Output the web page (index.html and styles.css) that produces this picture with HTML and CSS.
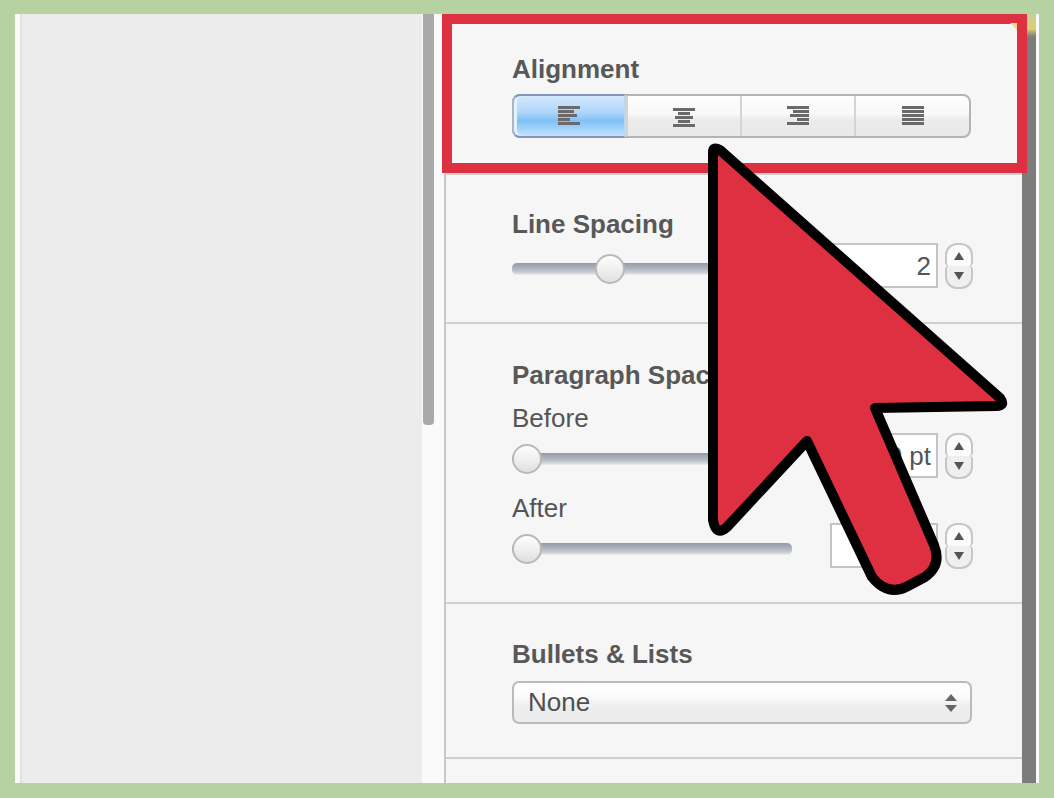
FILE: index.html
```html
<!DOCTYPE html>
<html lang="en">
<head>
    <meta charset="UTF-8">
    <title>Alignment</title>
    <link rel="stylesheet" href="styles.css">
</head>
<body>

<div class="stage">
    <div class="left-pane"></div>
    <div class="scroll-track"><div class="scroll-thumb"></div></div>

    <div class="panel">
        <div class="corner"></div>

        <section class="section section-align">
            <h3>Alignment</h3>
            <div class="segments">
                <div class="segment active">
                    <svg width="24" height="20" viewBox="0 0 24 20"><path d="M1 1.500h22M1 5.500h16M1 9.500h19M1 13.500h12M1 17.500h22"/></svg>
                </div>
                <div class="segment">
                    <svg class="low" width="24" height="20" viewBox="0 0 24 20"><path d="M1 1.500h22M6 5.500h12M3 9.500h18M6 13.500h12M1 17.500h22"/></svg>
                </div>
                <div class="segment">
                    <svg width="24" height="20" viewBox="0 0 24 20"><path d="M1 1.500h22M7 5.500h16M4 9.500h19M11 13.500h12M1 17.500h22"/></svg>
                </div>
                <div class="segment">
                    <svg width="24" height="20" viewBox="0 0 24 20"><path d="M1 1.500h22M1 5.500h22M1 9.500h22M1 13.500h22M1 17.500h22"/></svg>
                </div>
            </div>
        </section>

        <section class="section section-line">
            <h3>Line Spacing</h3>
            <div class="control-row">
                <div class="slider"><span class="thumb thumb-mid"></span></div>
                <div class="num-input">2</div>
                <div class="stepper"><span class="step-up"></span><span class="step-down"></span></div>
            </div>
        </section>

        <section class="section section-para">
            <h3>Paragraph Spacing</h3>
            <div class="sub-label first">Before</div>
            <div class="control-row">
                <div class="slider"><span class="thumb"></span></div>
                <div class="num-input">0 pt</div>
                <div class="stepper"><span class="step-up"></span><span class="step-down"></span></div>
            </div>
            <div class="sub-label">After</div>
            <div class="control-row">
                <div class="slider"><span class="thumb"></span></div>
                <div class="num-input">0 pt</div>
                <div class="stepper"><span class="step-up"></span><span class="step-down"></span></div>
            </div>
        </section>

        <section class="section section-bullets">
            <h3>Bullets &amp; Lists</h3>
            <div class="dropdown">
                <span>None</span>
                <span class="dropdown-arrows"><i class="arrow-up"></i><i class="arrow-down"></i></span>
            </div>
        </section>
    </div>

    <div class="side-bar"></div>
    <div class="edge"></div>
</div>

<!-- highlight box and pointer drawn over the screenshot -->
<div class="highlight"></div>
<svg class="pointer" width="1054" height="798" viewBox="0 0 1054 798">
    <path d="M713 152 Q713 146 720 150 L1000 398 Q1006 406 996 406 L875 408 L934 545 Q942 565 925 577 L908 586 Q888 597 872 577 L807 441 L727 527 Q716 537 713 520 Z"/>
</svg>

</body>
</html>
```

FILE: styles.css
```css
body {
    margin: 0;
    width: 1054px;
    height: 798px;
    overflow: hidden;
    background-color: #b5d2a0;
    font-family: "Liberation Sans", Arial, sans-serif;
    color: #555;
}

.stage {
    display: flex;
    height: 769px;
    padding: 14px 15px 15px 15px;
}

.left-pane {
    width: 402px;
    border-left: 5px solid #fbfbfb;
    background: linear-gradient(to right, #dcdcdc, #ececec 3px);
}

.scroll-track {
    width: 21px;
    padding-left: 1px;
    background-color: #fafafa;
    border-right: 2px solid #c8c8c8;
    background-clip: padding-box;
}

.scroll-thumb {
    width: 11px;
    height: 411px;
    background-color: #a9a9a9;
    border-radius: 0 0 4px 4px;
}

.panel {
    position: relative;
    width: 576px;
    background-color: #f6f6f6;
}

.corner {
    position: absolute;
    top: 9px;
    right: 5px;
    width: 0;
    height: 0;
    border-top: 7px solid #f1d88c;
    border-left: 7px solid transparent;
    z-index: 3;
}

.side-bar {
    width: 14px;
    background: linear-gradient(to bottom, #c5cf9a, #e0cc70 15px, #8a8a80 21px, #7c7c7c 24px);
}

.edge {
    width: 3px;
    background-color: #fafafa;
}

.section {
    padding-left: 66px;
    border-bottom: 2px solid #cfcfcf;
}

.section-align {
    padding-top: 40px;
    padding-bottom: 35px;
}

.section-line {
    padding-top: 34px;
    padding-bottom: 34px;
}

.section-para {
    padding-top: 36px;
    padding-bottom: 34px;
}

.section-bullets {
    padding-top: 35px;
    padding-bottom: 33px;
}

h3 {
    margin: 0;
    font-size: 26px;
    line-height: 30px;
    font-weight: bold;
    color: #585858;
}

.sub-label {
    margin-top: 15px;
    font-size: 26px;
    line-height: 30px;
}

.sub-label.first {
    margin-top: 13px;
}

/* segmented control */
.segments {
    display: flex;
    width: 459px;
    height: 44px;
    margin-top: 10px;
    box-sizing: border-box;
    border: 2px solid #b4b4b4;
    border-radius: 8px;
    background: linear-gradient(to bottom, #fefefe, #f8f8f8 45%, #ebebeb 60%, #e9e9e9);
}

.segment {
    flex: 0 0 114px;
    box-sizing: border-box;
    display: flex;
    align-items: center;
    justify-content: center;
    border-left: 2px solid #d4d4d4;
}

.segment:last-child {
    flex: 1;
}

.segment.active {
    margin: -2px 0 -2px -2px;
    border: 2px solid #8095b8;
    border-left-color: #a9b6c9;
    border-right-color: #b9d8f2;
    border-radius: 8px 0 0 8px;
    box-shadow: inset 3px 0 0 #e4f2fd;
    background: linear-gradient(to bottom, #d3e8fc, #b0d7fb 40%, #80c0f6 62%, #c2e2fb);
}

.segment svg {
    fill: none;
    stroke: #6a6a6a;
    stroke-width: 3;
}

.segment svg.low {
    margin-top: 4px;
}

/* slider + number field */
.control-row {
    display: flex;
    align-items: center;
    height: 45px;
}

.section-line .control-row {
    margin-top: 4px;
}

.slider {
    position: relative;
    width: 280px;
    height: 12px;
    margin-top: 7px;
    border-radius: 5px;
    background: linear-gradient(to bottom, #969ba7, #b2b6c1 50%, #cdd0d6 80%, #ececec);
}

.thumb {
    position: absolute;
    left: 0;
    top: -9px;
    width: 26px;
    height: 26px;
    border: 2px solid #b9b9b9;
    border-radius: 50%;
    background: linear-gradient(to bottom, #fdfdfd, #f0f0f0 50%, #dfdfdf);
}

.thumb-mid {
    left: 83px;
}

.num-input {
    width: 108px;
    height: 45px;
    margin-left: 38px;
    box-sizing: border-box;
    padding-right: 5px;
    border: 2px solid #c4c4c4;
    background-color: #fff;
    font-size: 26px;
    line-height: 43px;
    text-align: right;
}

.stepper {
    width: 28px;
    height: 46px;
    margin-left: 7px;
    display: flex;
    flex-direction: column;
}

.stepper span {
    position: relative;
    flex: 1;
    box-sizing: border-box;
    border: 2px solid #c6c6c6;
}

.step-up {
    border-bottom: none !important;
    border-radius: 12px 12px 4px 4px;
    background-color: #fbfbfb;
}

.step-down {
    border-top: none !important;
    border-radius: 4px 4px 12px 12px;
    background-color: #efefef;
}

.step-up::after,
.step-down::after {
    content: "";
    position: absolute;
    left: 7px;
    border-left: 5px solid transparent;
    border-right: 5px solid transparent;
}

.step-up::after {
    top: 7px;
    border-bottom: 8px solid #555;
}

.step-down::after {
    top: 6px;
    border-top: 8px solid #555;
}

/* select */
.dropdown {
    display: flex;
    align-items: center;
    justify-content: space-between;
    width: 460px;
    height: 43px;
    margin-top: 12px;
    padding: 0 13px 0 14px;
    box-sizing: border-box;
    border: 2px solid #bababa;
    border-radius: 7px;
    background: linear-gradient(to bottom, #ffffff, #fbfbfb 35%, #eeeeee 60%, #ebebeb);
    font-size: 26px;
    color: #505050;
}

.dropdown-arrows {
    display: flex;
    flex-direction: column;
    gap: 4px;
}

.dropdown-arrows i {
    display: block;
    border-left: 6px solid transparent;
    border-right: 6px solid transparent;
}

.arrow-up {
    border-bottom: 7px solid #666;
}

.arrow-down {
    border-top: 7px solid #666;
}

/* overlays */
.highlight {
    position: absolute;
    left: 442px;
    top: 14px;
    width: 565px;
    height: 139px;
    border: 10px solid #de3040;
}

.pointer {
    position: absolute;
    left: 0;
    top: 0;
}

.pointer path {
    fill: #de3040;
    stroke: #000;
    stroke-width: 10;
    stroke-linejoin: round;
}
```
